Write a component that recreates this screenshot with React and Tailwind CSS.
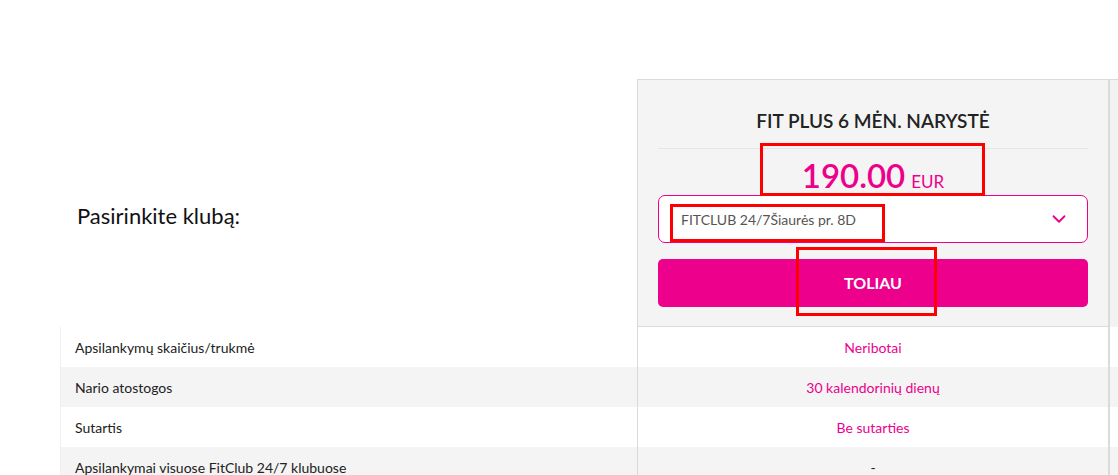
import React from "react";
import { ChevronDown } from "lucide-react";

const rows = [
  { label: "Apsilankymų skaičius/trukmė", value: "Neribotai", grey: false },
  { label: "Nario atostogos", value: "30 kalendorinių dienų", grey: true },
  { label: "Sutartis", value: "Be sutarties", grey: false },
  { label: "Apsilankymai visuose FitClub 24/7 klubuose", value: "-", grey: true, dark: true },
];

export default function App() {
  return (
    <div
      className="relative w-[1118px] h-[475px] overflow-hidden bg-white"
      style={{ fontFamily: "Lato, 'Open Sans', sans-serif" }}
    >
      <div className="pt-[79px] pl-[60px]">
        {/* header row */}
        <div className="flex">
          <div className="w-[577px] shrink-0 pt-[122px] pl-[17px]">
            <div className="text-[22px] leading-[30px] text-[#111]">Pasirinkite klubą:</div>
          </div>
          <div className="w-[472px] shrink-0 border-x border-t border-b border-[#dadada] bg-[#f4f4f4] px-5 pt-[27px] pb-[19px]">
            <div className="text-center text-[19px] leading-[28px] font-semibold text-[#222]">
              FIT PLUS 6 MĖN. NARYSTĖ
            </div>
            <div className="mt-[13px] h-px bg-[#e6e6e6]" />
            <div className="mt-[6px] flex h-[40px] items-baseline justify-center gap-[6px] text-[#ec008c]">
              <span className="text-[33px] leading-[40px] font-semibold">190.00</span>
              <span className="text-[17px] leading-[20px]">EUR</span>
            </div>
            <div className="flex h-[48px] items-center justify-between rounded-[7px] border border-[#ec008c] bg-white pl-[22px] pr-[17px]">
              <span className="text-[14px] text-[#555]">FITCLUB 24/7Šiaurės pr. 8D</span>
              <ChevronDown size={22} strokeWidth={2} color="#ec008c" />
            </div>
            <div className="mt-[16px] flex h-[48px] items-center justify-center rounded-[5px] bg-[#ec008c] text-[16px] font-bold text-white">
              TOLIAU
            </div>
          </div>
          <div className="flex-1 border-l border-t border-[#dadada] bg-[#f2f2f2]" />
        </div>
        {/* table rows */}
        {rows.map((r) => (
          <div key={r.label} className={`flex h-[40px] ${r.grey ? "bg-[#f4f4f4]" : "bg-white"}`}>
            <div className="flex w-[577px] shrink-0 items-center border-l border-[#efefef] pl-[14px] text-[14px] text-[#222]">
              {r.label}
            </div>
            <div
              className={`flex w-[472px] shrink-0 items-center justify-center border-x border-[#dadada] text-[14px] ${
                r.dark ? "text-[#222]" : "text-[#ec008c]"
              }`}
            >
              {r.value}
            </div>
            <div className="flex-1 border-l border-[#dadada]" />
          </div>
        ))}
      </div>

      {/* red annotation boxes */}
      <div className="absolute left-[760px] top-[143px] h-[53px] w-[225px] border-[3px] border-[#ff0000]" />
      <div className="absolute left-[670px] top-[204px] h-[38px] w-[215px] border-[3px] border-[#ff0000]" />
      <div className="absolute left-[796px] top-[247px] h-[69px] w-[141px] border-[3px] border-[#ff0000]" />
    </div>
  );
}
